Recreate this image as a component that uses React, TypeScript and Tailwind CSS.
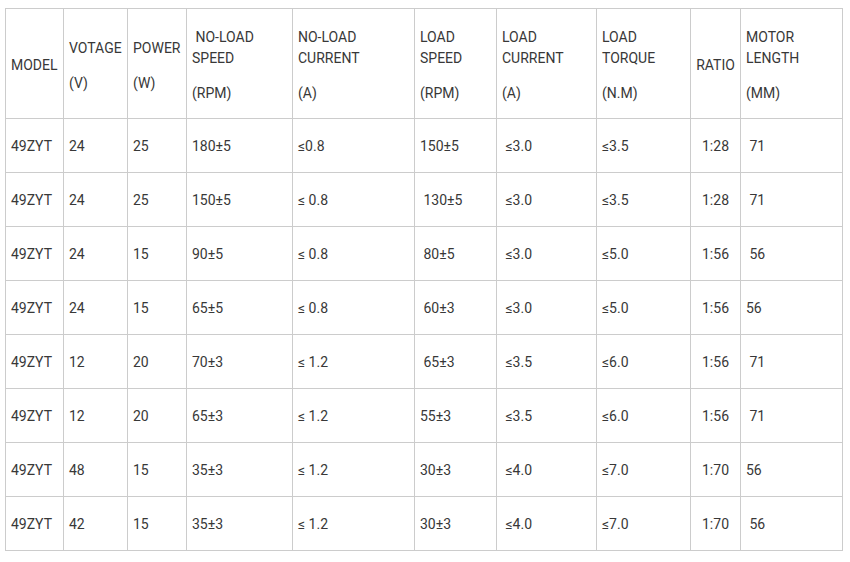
type Head = { lines: string[]; unit?: string; center?: boolean };

const heads: Head[] = [
  { lines: ["MODEL"] },
  { lines: ["VOTAGE"], unit: "(V)" },
  { lines: ["POWER"], unit: "(W)" },
  { lines: [" NO-LOAD", "SPEED"], unit: "(RPM)" },
  { lines: ["NO-LOAD", "CURRENT"], unit: "(A)" },
  { lines: ["LOAD", "SPEED"], unit: "(RPM)" },
  { lines: ["LOAD", "CURRENT"], unit: "(A)" },
  { lines: ["LOAD", "TORQUE"], unit: "(N.M)" },
  { lines: ["RATIO"], center: true },
  { lines: ["MOTOR", "LENGTH"], unit: "(MM)" },
];

const rows: string[][] = [
  ["49ZYT", "24", "25", "180±5", "≤0.8", "150±5", " ≤3.0", "≤3.5", "1:28", " 71"],
  ["49ZYT", "24", "25", "150±5", "≤ 0.8", " 130±5", " ≤3.0", "≤3.5", "1:28", " 71"],
  ["49ZYT", "24", "15", "90±5", "≤ 0.8", " 80±5", " ≤3.0", "≤5.0", "1:56", " 56"],
  ["49ZYT", "24", "15", "65±5", "≤ 0.8", " 60±3", " ≤3.0", "≤5.0", "1:56", "56"],
  ["49ZYT", "12", "20", "70±3", "≤ 1.2", " 65±3", " ≤3.5", "≤6.0", "1:56", " 71"],
  ["49ZYT", "12", "20", "65±3", "≤ 1.2", "55±3", " ≤3.5", "≤6.0", "1:56", " 71"],
  ["49ZYT", "48", "15", "35±3", "≤ 1.2", "30±3", " ≤4.0", "≤7.0", "1:70", "56"],
  ["49ZYT", "42", "15", "35±3", "≤ 1.2", "30±3", " ≤4.0", "≤7.0", "1:70", " 56"],
];

const cell = "border border-[#ccc] px-[5px] align-middle whitespace-pre font-normal";

export default function App() {
  return (
    <div className="min-h-[562px] bg-white pl-[5px] pt-[8px] text-[14px] leading-[21px] text-[#383838] [font-family:Roboto,'Liberation_Sans',sans-serif]">
      <table className="w-[838px] table-fixed border-collapse">
        <colgroup>
          <col className="w-[58px]" />
          <col className="w-[64px]" />
          <col className="w-[59px]" />
          <col className="w-[106px]" />
          <col className="w-[122px]" />
          <col className="w-[82px]" />
          <col className="w-[100px]" />
          <col className="w-[94px]" />
          <col className="w-[50px]" />
          <col className="w-[102px]" />
        </colgroup>
        <thead>
          <tr className="h-[110px]">
            {heads.map((h, i) => (
              <th key={i} className={`${cell} pt-[4px] ${h.center ? "text-center" : "text-left"}`}>
                {h.lines.map((l) => (
                  <div key={l}>{l}</div>
                ))}
                {h.unit && <div className="mt-[14px]">{h.unit}</div>}
              </th>
            ))}
          </tr>
        </thead>
        <tbody>
          {rows.map((r, ri) => (
            <tr key={ri} className="h-[54px]">
              {r.map((v, ci) => (
                <td key={ci} className={`${cell} pt-[2px] ${ci === 8 ? "text-center" : "text-left"}`}>
                  {v}
                </td>
              ))}
            </tr>
          ))}
        </tbody>
      </table>
    </div>
  );
}
